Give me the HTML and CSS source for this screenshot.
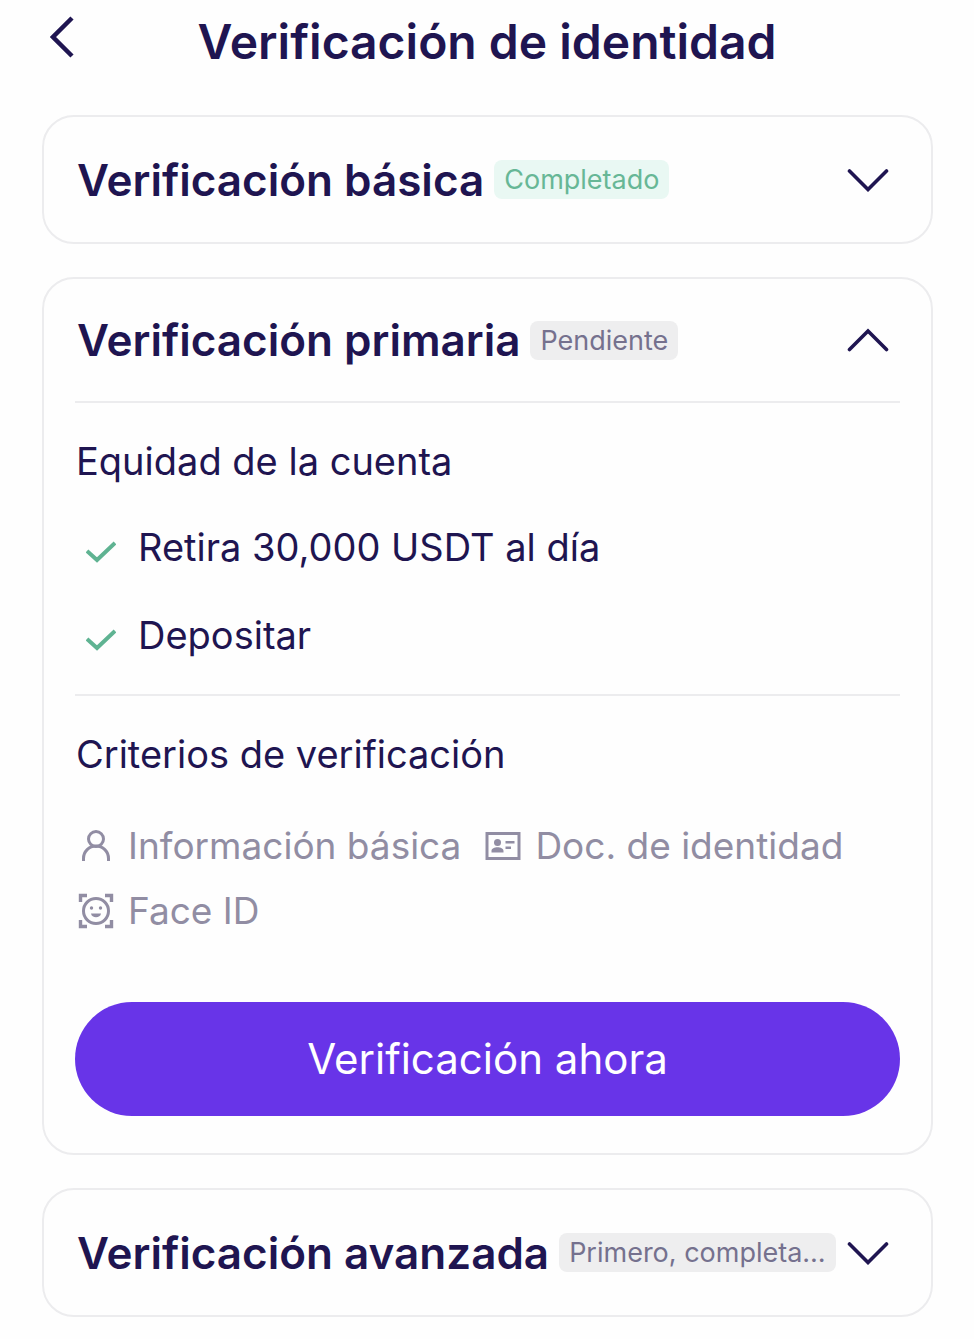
FILE: index.html
```html
<!DOCTYPE html>
<html lang="es">
<head>
<meta charset="utf-8">
<meta name="viewport" content="width=device-width, initial-scale=1">
<title>Verificación de identidad</title>
<link rel="stylesheet" href="styles.css">
</head>
<body>
<header class="topbar">
  <button class="back" type="button" aria-label="Volver">
    <svg width="24" height="42" viewBox="0 0 24 42" fill="none" stroke="currentColor" stroke-width="4.500"><path d="M22 2 3 21l19 19"/></svg>
  </button>
  <h1 class="page-title">Verificación de identidad</h1>
</header>
<main class="levels">
  <section class="card">
    <h2 class="card-heading">
      <button class="card-head" type="button" aria-expanded="false">
        <span class="card-title">Verificación básica</span>
        <span class="badge badge-done">Completado</span>
        <svg class="chevron" width="42" height="24" viewBox="0 0 42 24" fill="none" stroke="currentColor" stroke-width="3.600" stroke-linecap="round"><path d="M2.500 3 21 21.500 39.500 3"/></svg>
      </button>
    </h2>
  </section>

  <section class="card">
    <h2 class="card-heading">
      <button class="card-head card-head-open" type="button" aria-expanded="true" aria-controls="primary-panel">
        <span class="card-title">Verificación primaria</span>
        <span class="badge">Pendiente</span>
        <svg class="chevron" width="42" height="24" viewBox="0 0 42 24" fill="none" stroke="currentColor" stroke-width="3.600" stroke-linecap="round"><path d="M2.500 21.500 21 3l18.500 18.500"/></svg>
      </button>
    </h2>
    <div id="primary-panel">
      <div class="block">
        <h3 class="block-title">Equidad de la cuenta</h3>
        <ul class="benefits">
          <li class="benefit">
            <svg class="check" width="30" height="22" viewBox="0 0 30 22" fill="none" stroke="currentColor" stroke-width="4"><path d="M1 10l10 9L29 2"/></svg>
            Retira 30,000 USDT al día
          </li>
          <li class="benefit">
            <svg class="check" width="30" height="22" viewBox="0 0 30 22" fill="none" stroke="currentColor" stroke-width="4"><path d="M1 10l10 9L29 2"/></svg>
            Depositar
          </li>
        </ul>
      </div>
      <div class="block">
        <h3 class="block-title">Criterios de verificación</h3>
        <ul class="criteria">
          <li class="criterion">
            <svg width="36" height="36" viewBox="0 0 36 36" fill="none" stroke="currentColor" stroke-width="3"><circle cx="18" cy="11" r="7.500"/><path d="M5.500 33v-2.500a12.500 12.500 0 0 1 25 0V33"/></svg>
            Información básica
          </li>
          <li class="criterion">
            <svg width="36" height="36" viewBox="0 0 36 36"><rect x="2" y="5.500" width="32" height="25" fill="none" stroke="currentColor" stroke-width="3"/><g fill="currentColor"><circle cx="12.500" cy="14.500" r="3.500"/><path d="M6.500 24.500v-1.500c0-5 12-5 12 0v1.500zM20.500 13h9v2.500h-9zM20.500 18.500h5.500V21h-5.500z"/></g></svg>
            Doc. de identidad
          </li>
          <li class="criterion">
            <svg width="36" height="36" viewBox="0 0 36 36" fill="none" stroke="currentColor" stroke-width="3.400"><path d="M2.500 9V2.500H9M27 2.500h6.500V9M33.500 27v6.500H27M9 33.500H2.500V27"/><circle cx="18" cy="18" r="12.500" stroke-width="3"/><g fill="currentColor" stroke="none"><circle cx="13.500" cy="15" r="1.700"/><circle cx="22.500" cy="15" r="1.700"/><path d="M13 20.500h10c-.5 5-9.500 5-10 0z"/></g></svg>
            Face ID
          </li>
        </ul>
        <button class="primary" type="button">Verificación ahora</button>
      </div>
    </div>
  </section>

  <section class="card">
    <h2 class="card-heading">
      <button class="card-head" type="button" aria-expanded="false">
        <span class="card-title">Verificación avanzada</span>
        <span class="badge">Primero, completa…</span>
        <svg class="chevron" width="42" height="24" viewBox="0 0 42 24" fill="none" stroke="currentColor" stroke-width="3.600" stroke-linecap="round"><path d="M2.500 3 21 21.500 39.500 3"/></svg>
      </button>
    </h2>
  </section>
</main>
</body>
</html>
```
FILE: styles.css
```css
* {
  box-sizing: border-box;
}

body {
  margin: 0;
  background: #fefefe;
  color: #1f1551;
  font-family: Inter, "Liberation Sans", sans-serif;
}

h1, h2, h3, ul {
  margin: 0;
  padding: 0;
}

ul {
  list-style: none;
}

svg {
  display: block;
  flex: none;
}

button {
  border: 0;
  background: none;
  color: inherit;
  font: inherit;
  cursor: pointer;
}

.topbar {
  display: grid;
  grid-template-columns: 24px 1fr 24px;
  padding: 14px 50px 45px;
}

.back {
  padding: 2px 0;
  align-self: start;
}

.page-title {
  font-size: 48px;
  line-height: 56px;
  font-weight: 600;
  text-align: center;
  white-space: nowrap;
}

.levels {
  display: flex;
  flex-direction: column;
  gap: 33px;
  padding: 0 41px 23px 42px;
}

.card {
  border: 2px solid #ececee;
  border-radius: 32px;
  padding: 0 31px;
}

.card-heading {
  font-weight: 400;
}

.card-head {
  display: flex;
  align-items: center;
  gap: 10px;
  width: 100%;
  min-height: 125px;
  padding: 0 11px 0 2px;
  text-align: left;
}

.card-head-open {
  min-height: 122px;
}

.card-title {
  font-size: 44px;
  line-height: 48px;
  font-weight: 600;
  white-space: nowrap;
}

.badge {
  min-width: 0;
  overflow: hidden;
  text-overflow: ellipsis;
  white-space: nowrap;
  padding: 0 10px;
  border-radius: 8px;
  background: #eeeeef;
  color: #75718e;
  font-size: 27px;
  line-height: 39px;
}

.badge-done {
  background: #e9f8f3;
  color: #67b796;
}

.chevron {
  margin-left: auto;
}

.block {
  border-top: 2px solid #ececee;
  padding: 36px 0 37px;
}

.block-title,
.benefit {
  font-size: 38px;
  line-height: 44px;
  font-weight: 400;
}

.block-title {
  padding-left: 1px;
}

.benefits {
  display: grid;
  gap: 44px;
  margin-top: 42px;
  padding-left: 11px;
}

.benefit {
  display: flex;
  align-items: center;
  gap: 22px;
}

.check {
  margin-top: 10px;
  color: #5fb392;
}

.criteria {
  display: flex;
  flex-wrap: wrap;
  gap: 21px 24px;
  margin-top: 48px;
  padding-left: 3px;
  color: #918da3;
}

.criterion {
  display: flex;
  align-items: center;
  gap: 14px;
  font-size: 37px;
  line-height: 44px;
}

.primary {
  width: 100%;
  margin-top: 69px;
  padding: 32px;
  border-radius: 57px;
  background: #6834e8;
  color: #fff;
  font-size: 42px;
  line-height: 50px;
}
```
